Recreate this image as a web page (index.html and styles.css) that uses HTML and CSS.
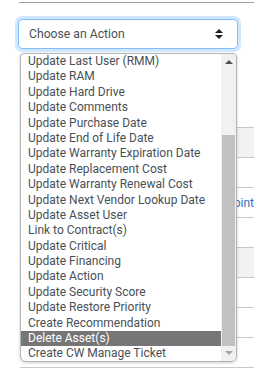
FILE: index.html
```html
<!DOCTYPE html>
<html lang="en">
<head>
  <meta charset="UTF-8">
  <meta name="viewport" content="width=device-width, initial-scale=1.0">
  <title>Asset Actions</title>
  <link rel="stylesheet" href="styles.css">
</head>
<body>

<div class="page">
  <div class="rule"></div>

  <div class="action-select">
    <span>Choose an Action</span>
    <svg class="caret" width="8" height="12" viewBox="0 0 8 12">
      <path d="M0 5 L4 1 L8 5 Z M0 7 L4 11 L8 7 Z" fill="#222"/>
    </svg>
  </div>

  <div class="table">
    <div class="row"></div>
    <div class="row shade"></div>
    <div class="row"></div>
    <div class="row"><span class="cell-link">Appoint</span></div>
    <div class="row"></div>
    <div class="row shade"></div>
    <div class="row"></div>
    <div class="row"></div>
    <div class="row"></div>
  </div>

  <!-- open dropdown list, sits over the table -->
  <div class="dropdown">
    <ul class="options">
      <li>Update Last User (RMM)</li>
      <li>Update RAM</li>
      <li>Update Hard Drive</li>
      <li>Update Comments</li>
      <li>Update Purchase Date</li>
      <li>Update End of Life Date</li>
      <li>Update Warranty Expiration Date</li>
      <li>Update Replacement Cost</li>
      <li>Update Warranty Renewal Cost</li>
      <li>Update Next Vendor Lookup Date</li>
      <li>Update Asset User</li>
      <li>Link to Contract(s)</li>
      <li>Update Critical</li>
      <li>Update Financing</li>
      <li>Update Action</li>
      <li>Update Security Score</li>
      <li>Update Restore Priority</li>
      <li>Create Recommendation</li>
      <li class="selected">Delete Asset(s)</li>
      <li>Create CW Manage Ticket</li>
    </ul>
    <div class="scrollbar">
      <div class="arrow up"></div>
      <div class="thumb"></div>
      <div class="arrow down"></div>
    </div>
  </div>
</div>

</body>
</html>
```

FILE: styles.css
```css
body {
    margin: 0;
    font-family: Roboto, "Liberation Sans", sans-serif;
    font-size: 12px;
    color: #495057;
    background-color: #fff;
}
.page {
    position: relative;
    width: 254px;
    height: 368px;
    overflow: hidden;
}
.rule {
    margin: 2px 0 0 19px;
    border-top: 1px solid #a0a0a0;
}
.action-select {
    margin: 16px 0 0 18px;
    width: 220px;
    height: 30px;
    box-sizing: border-box;
    padding: 0 14px 0 10px;
    display: flex;
    align-items: center;
    justify-content: space-between;
    border: 1px solid #80bdff;
    border-radius: 4px;
    box-shadow: 0 0 0 3px rgba(0, 123, 255, 0.18);
    font-size: 12.2px;
}
.table {
    margin-top: 49px;
    margin-left: 20px;
}
.row {
    height: 29px;
    border-bottom: 1px solid #c4c9ce;
    display: flex;
    align-items: center;
    justify-content: flex-end;
}
.row.shade {
    background-color: #f2f2f2;
}
.cell-link {
    color: #3b6fb6;
    font-size: 12px;
    margin-right: 0;
}
.dropdown {
    position: absolute;
    left: 20px;
    top: 53px;
    width: 217px;
    height: 309px;
    box-sizing: border-box;
    border: 1px solid #b4b4b4;
    border-radius: 4px 4px 6px 6px;
    background-color: #fff;
    box-shadow: 0 1px 3px rgba(0, 0, 0, 0.2);
    display: flex;
    overflow: hidden;
}
.options {
    list-style: none;
    margin: 0;
    padding: 0;
    flex: 1;
}
.options li {
    height: 15.4px;
    line-height: 15.4px;
    padding-left: 7px;
    white-space: nowrap;
}
.options li.selected {
    background-color: #767676;
    color: #fff;
}
.scrollbar {
    width: 15px;
    background-color: #f1f1f1;
    position: relative;
}
.thumb {
    position: absolute;
    left: 1px;
    right: 1px;
    top: 81px;
    height: 211px;
    background-color: #c1c1c1;
}
.arrow {
    position: absolute;
    left: 4px;
    width: 0;
    height: 0;
    border-left: 4px solid transparent;
    border-right: 4px solid transparent;
}
.arrow.up {
    top: 6px;
    border-bottom: 4px solid #505050;
}
.arrow.down {
    bottom: 6px;
    border-top: 4px solid #a3a3a3;
}
```
